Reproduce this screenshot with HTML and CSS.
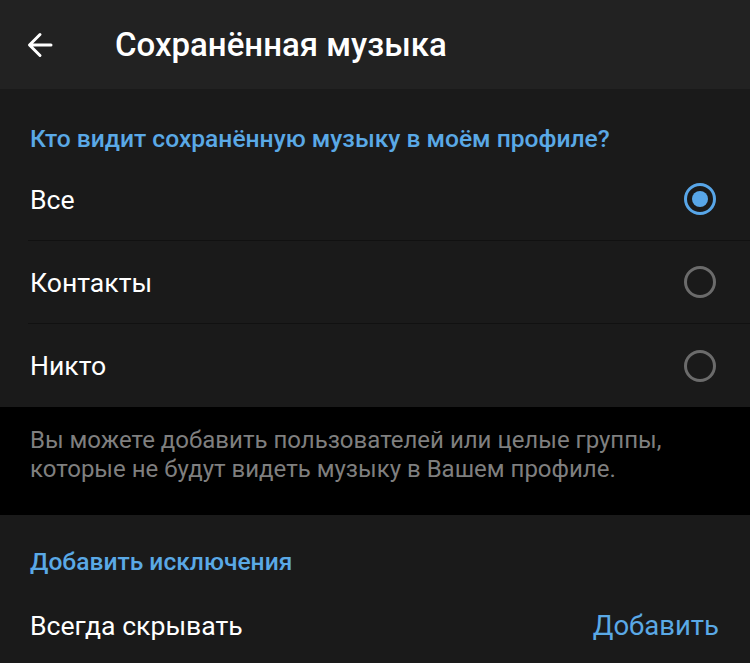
FILE: index.html
```html
<!DOCTYPE html>
<html lang="ru">
<head>
<meta charset="utf-8">
<link rel="stylesheet" href="styles.css">
</head>
<body>
<div class="screen">
  <header class="topbar">
    <span class="back">
      <svg width="26" height="26" viewBox="0 0 26 26"><path d="M24 13H3M13 2.5L2.5 13 13 23.5" fill="none" stroke="#fff" stroke-width="3" stroke-linecap="round" stroke-linejoin="round"/></svg>
    </span>
    <h1 class="title">Сохранённая музыка</h1>
  </header>

  <section class="group">
    <h2 class="group-title">Кто видит сохранённую музыку в моём профиле?</h2>
    <div class="row">
      <span class="label">Все</span>
      <span class="radio checked"></span>
    </div>
    <div class="row">
      <span class="label">Контакты</span>
      <span class="radio"></span>
    </div>
    <div class="row last">
      <span class="label">Никто</span>
      <span class="radio"></span>
    </div>
  </section>

  <p class="hint">Вы можете добавить пользователей или целые группы,<br>которые не будут видеть музыку в Вашем профиле.</p>

  <section class="group">
    <h2 class="group-title second">Добавить исключения</h2>
    <div class="row last">
      <span class="label">Всегда скрывать</span>
      <span class="action">Добавить</span>
    </div>
  </section>
</div>
</body>
</html>
```

FILE: styles.css
```css
* { box-sizing: border-box; }
html, body { margin: 0; padding: 0; background: #1a1a1a; }
body { font-family: Roboto, "Noto Sans", sans-serif; color: #fff; }
.screen { width: 750px; height: 663px; overflow: hidden; background: #1a1a1a; }

.topbar {
  height: 89px;
  background: #222222;
  display: flex;
  align-items: center;
  padding-left: 27px;
}
.back { display: flex; width: 26px; height: 26px; margin-right: 62px; }
.title {
  margin: 0;
  font-size: 33px;
  font-weight: 500;
  color: #fff;
  line-height: 40px;
}

.group { background: #1a1a1a; }
.group-title {
  margin: 0;
  padding: 35px 30px 0;
  height: 69px;
  font-size: 24.6px;
  font-weight: 500;
  color: #5aa9e6;
  line-height: 30px;
  white-space: nowrap;
}
.group-title.second { padding-top: 32px; }

.row {
  height: 83px;
  margin-left: 28px;
  padding-right: 34px;
  padding-left: 2px;
  display: flex;
  align-items: center;
  justify-content: space-between;
  border-bottom: 1px solid #111111;
}
.row.last { border-bottom: none; }
.label { font-size: 26.6px; color: #fff; }

.radio {
  width: 32px; height: 32px;
  border-radius: 50%;
  border: 3px solid #6b6b6b;
  display: flex; align-items: center; justify-content: center;
}
.radio.checked { border-color: #58a6e8; }
.radio.checked::after {
  content: "";
  width: 16px; height: 16px;
  border-radius: 50%;
  background: #58a6e8;
}

.hint {
  margin: 0;
  background: #000;
  height: 108px;
  padding: 19px 30px 0;
  font-size: 24px;
  line-height: 29px;
  color: #7f7f7f;
  white-space: nowrap;
}

.row .action { font-size: 27.5px; color: #5aa9e6; margin-right: -3px; }
```
